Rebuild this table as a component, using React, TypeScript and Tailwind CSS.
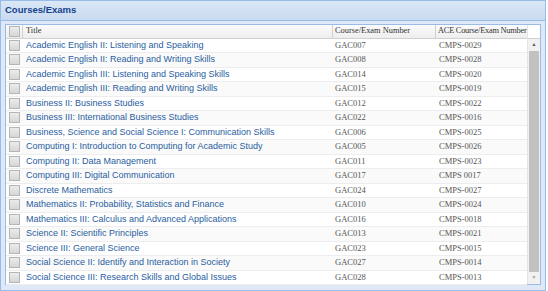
const rows = [
  ['Academic English II: Listening and Speaking', 'GAC007', 'CMPS-0029'],
  ['Academic English II: Reading and Writing Skills', 'GAC008', 'CMPS-0028'],
  ['Academic English III: Listening and Speaking Skills', 'GAC014', 'CMPS-0020'],
  ['Academic English III: Reading and Writing Skills', 'GAC015', 'CMPS-0019'],
  ['Business II: Business Studies', 'GAC012', 'CMPS-0022'],
  ['Business III: International Business Studies', 'GAC022', 'CMPS-0016'],
  ['Business, Science and Social Science I: Communication Skills', 'GAC006', 'CMPS-0025'],
  ['Computing I: Introduction to Computing for Academic Study', 'GAC005', 'CMPS-0026'],
  ['Computing II: Data Management', 'GAC011', 'CMPS-0023'],
  ['Computing III: Digital Communication', 'GAC017', 'CMPS 0017'],
  ['Discrete Mathematics', 'GAC024', 'CMPS-0027'],
  ['Mathematics II: Probability, Statistics and Finance', 'GAC010', 'CMPS-0024'],
  ['Mathematics III: Calculus and Advanced Applications', 'GAC016', 'CMPS-0018'],
  ['Science II: Scientific Principles', 'GAC013', 'CMPS-0021'],
  ['Science III: General Science', 'GAC023', 'CMPS-0015'],
  ['Social Science II: Identify and Interaction in Society', 'GAC027', 'CMPS-0014'],
  ['Social Science III: Research Skills and Global Issues', 'GAC028', 'CMPS-0013'],
];

const Check = () => (
  <span className="block w-[11px] h-[11px] border border-[#b5b5b5] bg-gradient-to-b from-[#ececec] to-[#d6d6d6]" />
);

export default function App() {
  return (
    <div className="w-[546px] h-[291px] overflow-hidden bg-[#dfe8f6] border border-[#99bbe8] font-['Liberation_Sans',Arial,sans-serif]">
      {/* panel title */}
      <div className="h-[20px] flex items-center px-[4px] bg-gradient-to-b from-[#dae7f6] to-[#c9daf1] border-b border-[#99bbe8]">
        <span className="text-[9.5px] font-bold text-[#15428b]">Courses/Exams</span>
      </div>

      {/* grid */}
      <div className="mx-[4px] mt-[3px] h-[261px] bg-white border border-[#99bbe8] flex">
        <div className="flex-1 flex flex-col min-w-0">
          <div className="h-[14px] flex items-stretch bg-gradient-to-b from-[#fbfbfb] to-[#eeeeee] border-b border-[#d0d0d0] font-['Liberation_Serif',Georgia,serif] text-[8.4px] text-[#333] whitespace-nowrap">
            <div className="w-[17px] shrink-0 flex items-center justify-center border-r border-[#d0d0d0]">
              <Check />
            </div>
            <div className="w-[310px] shrink-0 flex items-center pl-[3px] border-r border-[#d0d0d0]">Title</div>
            <div className="w-[103px] shrink-0 flex items-center pl-[2px] border-r border-[#d0d0d0]">Course/Exam Number</div>
            <div className="flex-1 min-w-0 flex items-center pl-[2px] tracking-[-0.25px]">ACE Course/Exam Number</div>
          </div>
          {rows.map(([title, code, ace], i) => (
            <div
              key={title}
              className={`h-[14.5px] flex items-center border-b border-[#ededed] ${i % 2 === 1 ? 'bg-[#fafafa]' : 'bg-white'}`}
            >
              <div className="w-[17px] shrink-0 flex items-center justify-center">
                <Check />
              </div>
              <div className="w-[310px] shrink-0 pl-[3px] text-[9px] text-[#2a5d9f] whitespace-nowrap overflow-hidden">{title}</div>
              <div className="w-[103px] shrink-0 pl-[2px] text-[8.5px] text-[#555] font-['Liberation_Serif',Georgia,serif]">{code}</div>
              <div className="flex-1 min-w-0 pl-[3px] text-[8.5px] text-[#555] font-['Liberation_Serif',Georgia,serif]">{ace}</div>
            </div>
          ))}
        </div>

        {/* scrollbar */}
        <div className="w-[13px] shrink-0 flex flex-col bg-[#f1f1f1] border-l border-[#e4e4e4]">
          <div className="h-[14px] bg-white border-b border-[#d0d0d0]" />
          <div className="h-[12px] flex items-center justify-center text-[5px] text-[#555]">▲</div>
          <div className="flex-1 mx-[1px] bg-[#c1c1c1]" />
          <div className="h-[12px] flex items-center justify-center text-[5px] text-[#a3a3a3]">▼</div>
        </div>
      </div>
    </div>
  );
}
